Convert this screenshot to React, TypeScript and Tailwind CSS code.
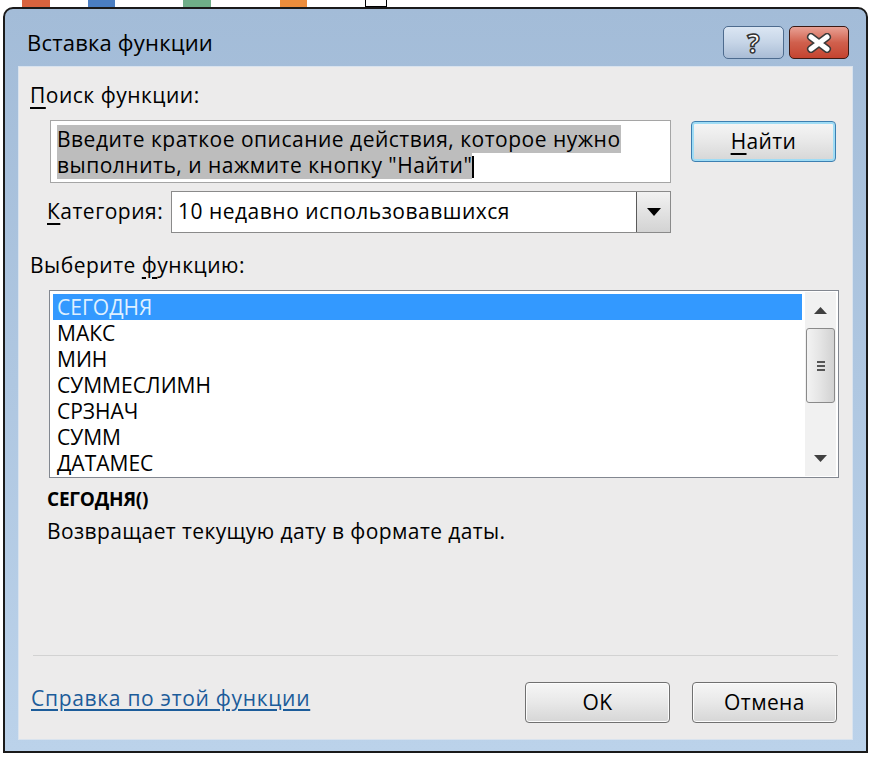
import React from "react";

const font = { fontFamily: '"Open Sans", "Noto Sans", "DejaVu Sans", sans-serif' };

const functions = ["СЕГОДНЯ", "МАКС", "МИН", "СУММЕСЛИМН", "СРЗНАЧ", "СУММ", "ДАТАМЕС"];

// Glossy Win7 style push button
const PushButton: React.FC<{ children: React.ReactNode; focused?: boolean }> = ({ children, focused }) => (
  <button
    className={
      "w-[145px] h-[41px] rounded-[4px] border text-[21px] tracking-[0.4px] text-black bg-gradient-to-b from-[#f6f6f6] via-[#e8e8e8] to-[#d6d6d6] shadow-[inset_0_0_0_1px_#fcfcfc] " +
      (focused ? "border-[#3c7fb1] shadow-[inset_0_0_0_2px_#9fdcf5]" : "border-[#707070]")
    }
  >
    {children}
  </button>
);

export default function App() {
  return (
    <div className="w-[872px] h-[758px] bg-white overflow-hidden flex flex-col" style={font}>
      {/* background spreadsheet strip */}
      <div className="h-[7px] flex shrink-0">
        <div className="ml-[22px] w-[28px] bg-[#d9633e]" />
        <div className="ml-[38px] w-[27px] bg-[#4a7ec2]" />
        <div className="ml-[68px] w-[28px] bg-[#6fae88]" />
        <div className="ml-[69px] w-[27px] bg-[#ec8d3c]" />
        <div className="ml-[58px] w-[22px] border-x border-b border-black" />
      </div>

      {/* window */}
      <div className="mx-[3px] w-[865px] h-[746px] border-2 border-[#1a1a1a] rounded-t-[10px] bg-gradient-to-b from-[#a3bcd8] to-[#bbd2ea] flex flex-col">
        {/* title bar */}
        <div className="h-[57px] flex items-center justify-between pl-[22px] pr-[17px] pt-[10px] shrink-0">
          <span className="text-[22px] tracking-[0.2px] text-black">Вставка функции</span>
          <div className="flex gap-[5px]">
            <div className="w-[61px] h-[33px] rounded-[5px] border border-[#4d6b8e] bg-gradient-to-b from-[#dbe6f3] via-[#c6d5e7] to-[#a9bcd5] flex items-center justify-center">
              <span
                className="text-[26px] font-bold text-white leading-none"
                style={{ WebkitTextStroke: "1.5px #333" }}
              >
                ?
              </span>
            </div>
            <div className="w-[60px] h-[33px] rounded-[5px] border border-[#3b1a14] bg-gradient-to-b from-[#e8a195] via-[#d0604d] to-[#c4432f] flex items-center justify-center">
              <svg width="28" height="20" viewBox="0 0 28 20">
                <path d="M6 4 L22 16 M22 4 L6 16" stroke="#3a3a3a" strokeWidth="8" strokeLinecap="round" />
                <path d="M6 4 L22 16 M22 4 L6 16" stroke="#ffffff" strokeWidth="5" strokeLinecap="round" />
              </svg>
            </div>
          </div>
        </div>

        {/* client area */}
        <div className="mx-[13px] mb-[11px] flex-1 bg-[#ecebeb] border border-[#d9e3ee] flex flex-col text-[21px] tracking-[0.5px] text-black">
          <div className="ml-[11px] mt-[14px] leading-[28px]">
            <span className="underline underline-offset-[4px]">П</span>оиск функции:
          </div>

          <div className="flex mt-[11px]">
            <div className="ml-[31px] w-[621px] h-[63px] bg-white border border-[#a5a5a5] pl-[6px] pt-[5px] leading-[26px]">
              <span className="bg-[#bdbdbd]">
                Введите краткое описание действия, которое нужно выполнить, и нажмите кнопку "Найти"
              </span>
              <span className="inline-block w-[2px] h-[22px] bg-black align-middle" />
            </div>
            <div className="ml-[20px] mt-[1px]">
              <PushButton focused>
                <span className="underline underline-offset-[4px]">Н</span>айти
              </PushButton>
            </div>
          </div>

          <div className="flex items-center mt-[8px]">
            <span className="ml-[28px] w-[124px]">
              <span className="underline underline-offset-[4px]">К</span>атегория:
            </span>
            <div className="w-[500px] h-[42px] bg-white border border-[#8a8a8a] flex items-stretch">
              <span className="flex-1 pl-[6px] flex items-center">10 недавно использовавшихся</span>
              <div className="w-[34px] border-l border-[#5a5a5a] bg-gradient-to-b from-[#f2f2f2] to-[#d3d3d3] flex items-center justify-center">
                <svg width="14" height="8" viewBox="0 0 14 8">
                  <path d="M0 0 H14 L7 8 Z" fill="#000" />
                </svg>
              </div>
            </div>
          </div>

          <div className="ml-[11px] mt-[18px] leading-[28px]">
            Выберите <span className="underline underline-offset-[4px]">ф</span>ункцию:
          </div>

          <div className="ml-[30px] mt-[11px] w-[790px] h-[188px] bg-white border border-[#828790] flex p-[3px] pr-[2px]">
            <div className="flex-1 flex flex-col">
              {functions.map((f, i) => (
                <div
                  key={f}
                  className={
                    "h-[26px] pl-[4px] leading-[26px] text-[21px] tracking-normal " +
                    (i === 0 ? "bg-[#3399ff] text-[#dff0ff] mr-[3px]" : "text-black")
                  }
                >
                  {f}
                </div>
              ))}
            </div>
            {/* scrollbar */}
            <div className="w-[31px] -my-[2px] bg-[#f1f1f1] flex flex-col items-center">
              <div className="h-[36px] flex items-center justify-center">
                <svg width="13" height="7" viewBox="0 0 13 7">
                  <path d="M0 7 L6.5 0 L13 7 Z" fill="#404040" />
                </svg>
              </div>
              <div className="w-[29px] h-[75px] rounded-[3px] border border-[#8a8a8a] bg-gradient-to-r from-[#f3f3f3] via-[#e4e4e4] to-[#d2d2d2] flex flex-col items-center justify-center gap-[2px]">
                <div className="w-[8px] h-[2px] bg-[#555]" />
                <div className="w-[8px] h-[2px] bg-[#555]" />
                <div className="w-[8px] h-[2px] bg-[#555]" />
              </div>
              <div className="flex-1 flex items-end justify-center pb-[14px]">
                <svg width="13" height="7" viewBox="0 0 13 7">
                  <path d="M0 0 L6.5 7 L13 0 Z" fill="#404040" />
                </svg>
              </div>
            </div>
          </div>

          <div className="ml-[28px] mt-[7px] text-[19px] font-bold tracking-[-0.2px] leading-[28px]">СЕГОДНЯ()</div>
          <div className="ml-[28px] mt-[4px] tracking-[0.4px] leading-[28px]">Возвращает текущую дату в формате даты.</div>

          <div className="flex-1" />
          <div className="mx-[14px] h-[2px] border-t border-[#d2d2d2] border-b-white" />

          <div className="flex items-center mt-[25px] mb-[16px]">
            <a className="ml-[12px] mb-[8px] tracking-[0.7px] text-[#1c5c9a] underline underline-offset-[3px]" href="#">
              Справка по этой функции
            </a>
            <div className="flex-1" />
            <PushButton>OK</PushButton>
            <div className="ml-[22px] mr-[15px]">
              <PushButton>Отмена</PushButton>
            </div>
          </div>
        </div>
      </div>
    </div>
  );
}
